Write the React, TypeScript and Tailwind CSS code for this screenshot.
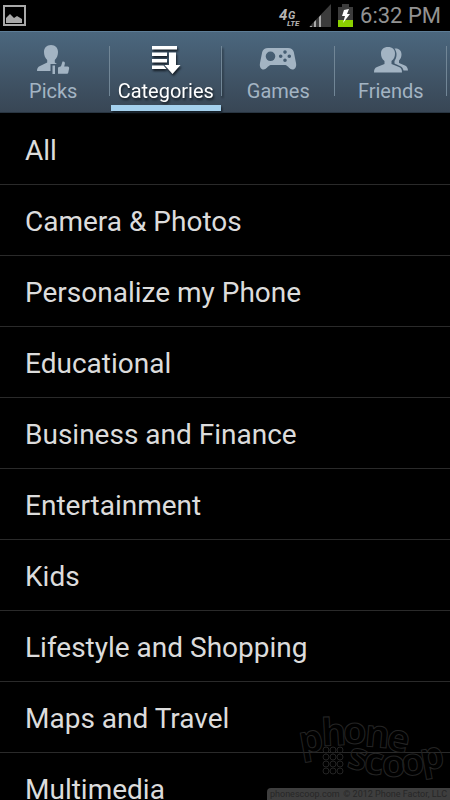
import React, { useState } from "react";

const categories = [
  "All",
  "Camera & Photos",
  "Personalize my Phone",
  "Educational",
  "Business and Finance",
  "Entertainment",
  "Kids",
  "Lifestyle and Shopping",
  "Maps and Travel",
  "Multimedia",
];

function PicksIcon() {
  return (
    <svg width="34" height="32" viewBox="0 0 34 32" fill="currentColor" aria-hidden="true">
      <path d="M15 1c-4.500 0-7 3-7 7 0 3 1 6 3.200 8v2.500L4 22c-2.200 1-3 2.500-3 5h13.500v-7H21l-2.200-1.500V16C21 14 22 11 22 8c0-4-2.500-7-7-7Z" />
      <path d="M16.500 21.500H19V30h-2.500zM22 23.500l3-1.200 1.500-4.800c1.800-.5 2.800.8 2.300 2.500l-.6 2.500h3.500c1.300 0 1.600 1 1.400 2l-.8 4c-.2.900-.8 1.300-1.600 1.300H22z" />
    </svg>
  );
}

function CategoriesIcon() {
  return (
    <svg width="34" height="32" viewBox="0 0 34 32" fill="currentColor" aria-hidden="true">
      <path d="M3 2h25v3.500H3zM3 8.500h15V12H3zM3 15h15v3.500H3zM3 21.500h11.500l3 3.500H3zM20 8.500h7V21h4.500L23.500 30l-8-9H20z" />
    </svg>
  );
}

function GamesIcon() {
  return (
    <svg width="38" height="32" viewBox="0 0 38 32" fill="currentColor" aria-hidden="true">
      <path
        fillRule="evenodd"
        d="M9 4h20c3 0 5 1.500 5.800 4L37 19c.8 4-1 6.500-3.500 6.500-3 0-4-3.500-7-4.500h-15c-3 1-4 4.500-7 4.500C2 25.500.2 23 1 19L3.200 8C4 5.500 6 4 9 4Zm2.500 3.500a4.800 4.800 0 1 0 0 9.600 4.800 4.800 0 0 0 0-9.600ZM26 6.300a1.800 1.800 0 1 0 0 3.600 1.800 1.800 0 0 0 0-3.600Zm-4.300 4.100a1.800 1.800 0 1 0 0 3.600 1.800 1.800 0 0 0 0-3.600Zm8.600 0a1.800 1.800 0 1 0 0 3.600 1.800 1.800 0 0 0 0-3.600ZM26 14.500a1.800 1.800 0 1 0 0 3.600 1.800 1.800 0 0 0 0-3.600Z"
      />
    </svg>
  );
}

function FriendsIcon() {
  return (
    <svg width="36" height="32" viewBox="0 0 36 32" fill="currentColor" aria-hidden="true">
      <path d="M15 3c-4.500 0-7 2.500-7 6.500 0 3 1 5.500 3.500 7.500v3L4 23c-2.200 1-3 2.500-3 5.500h28c0-3-.8-4.500-3-5.500l-7.500-3v-3c2.500-2 3.500-4.500 3.500-7.500C22 5.500 19.500 3 15 3Z" />
      <path d="M21.500 4.500c4.500-.5 7 2 7 6 0 2.500-1 4.500-2.500 6V19l6 2.500c2 1 2.700 2.500 3 5h-4.500c-.5-2.500-1.500-3.500-3.500-4.500l-5.500-2.500V17c2.500-3.500 3-8.500 0-12.500Z" />
    </svg>
  );
}

const tabs = [
  { name: "Picks", Icon: PicksIcon },
  { name: "Categories", Icon: CategoriesIcon },
  { name: "Games", Icon: GamesIcon },
  { name: "Friends", Icon: FriendsIcon },
];

function StatusBar() {
  return (
    <header className="flex h-[31px] items-center justify-between bg-black pr-[9px] pl-[3px] text-[#929292]">
      <svg width="23" height="21" viewBox="0 0 23 21" aria-label="Picture saved">
        <path d="M1 1h21v19H1z" fill="none" stroke="#a9a9a9" strokeWidth="2" />
        <path d="M3 18v-5l4-4 4 4 3-2 5 3v4z" fill="#a9a9a9" />
      </svg>
      <div className="flex items-center gap-[7px]">
        <svg
          className="overflow-visible"
          width="24"
          height="23"
          viewBox="0 0 24 23"
          fill="#b4b4b4"
          fontFamily="Roboto, sans-serif"
          fontStyle="italic"
          fontWeight="700"
          aria-label="4G LTE"
        >
          <text x="1" y="16" fontSize="15">4</text>
          <text x="10" y="15" fontSize="11">G</text>
          <text x="9" y="22" fontSize="8">LTE</text>
        </svg>
        <svg width="22" height="23" viewBox="0 0 22 23" aria-label="Signal">
          <path d="M22 0v23H0z" fill="#3c3c3c" />
          <path d="M1 22h2v1H1zM5 18l2-2v7H5zM10 13l2-2v12h-2z" fill="#aaa" />
        </svg>
        <svg width="15" height="23" viewBox="0 0 15 23" aria-label="Battery charging">
          <path d="M4 0h7v3h4v20H0V3h4z" fill="#3c3c3c" />
          <path d="M0 16h15v7H0z" fill="#8bd000" />
          <path d="m6 6 5-1-2 5h3l-7 9 2-7H4z" fill="#fff" />
        </svg>
        <span className="text-[22px] leading-none">6:32 PM</span>
      </div>
    </header>
  );
}

function Watermark() {
  return (
    <div className="pointer-events-none absolute right-0 bottom-0 w-[183px]">
      <svg
        className="block overflow-visible"
        width="183"
        height="76"
        viewBox="0 0 183 76"
        fill="none"
        stroke="#242424"
        fontFamily="'Open Sans', sans-serif"
        fontWeight="700"
        fontSize="38"
        aria-label="phone scoop"
      >
        <text x="34 55 76 97 118" y="42 34 32 34 37" rotate="-10 -3 0 5 12">phone</text>
        <text x="79 96 115 135 155" y="55 61 65 64 59" rotate="14 7 0 -5 -10">scoop</text>
        {[0, 1, 2, 3].map((row) =>
          [0, 1, 2].map((col) => (
            <circle key={`${row}-${col}`} cx={59 + col * 7} cy={38 + row * 7} r="3" />
          )),
        )}
      </svg>
      <p className="flex h-3 justify-between rounded-tl-sm bg-[#3e3e3e] px-[3px] text-[9px] leading-3 text-[#272727]">
        <span>phonescoop.com</span>
        <span>© 2012 Phone Factor, LLC</span>
      </p>
    </div>
  );
}

export default function App() {
  const [active, setActive] = useState("Categories");
  return (
    <div className="relative h-screen overflow-hidden bg-black font-[Roboto,sans-serif]">
      <StatusBar />
      <nav className="-ml-[3px] flex h-[82px] border-y border-t-[#5d7d96] border-b-[#293541] bg-linear-to-b from-[#4b677e] to-[#384655] pr-[3px]">
        {tabs.map(({ name, Icon }) => (
          <button
            key={name}
            type="button"
            onClick={() => setActive(name)}
            className={`relative flex flex-1 flex-col items-center pt-3 text-xl leading-6 ${
              active === name ? "text-white drop-shadow-[1px_2px_1px_#151d25]" : "text-[#a3b4c3]"
            }`}
          >
            <Icon />
            <span className="mt-[3px]">{name}</span>
            <span className="absolute top-[14px] right-0 h-[50px] w-px bg-[#718696]" />
            {active === name && <span className="absolute inset-x-[1px] bottom-[1px] h-[6px] bg-[#a4d0ed]" />}
          </button>
        ))}
      </nav>
      <ul className="pt-px">
        {categories.map((category) => (
          <li key={category} className="h-[71px] border-b border-[#2a2a2a]">
            <button
              type="button"
              className="flex h-full w-full items-center px-[25px] pt-1 text-left text-[28px] leading-8 text-[#dcdcdc]"
            >
              {category}
            </button>
          </li>
        ))}
      </ul>
      <Watermark />
    </div>
  );
}
